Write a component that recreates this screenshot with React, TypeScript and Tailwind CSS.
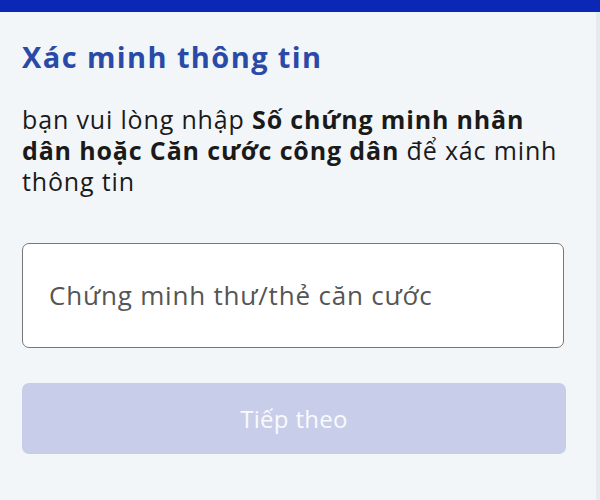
export default function App() {
  return (
    <div className="relative h-[500px] w-[600px] overflow-hidden bg-[#f3f6f9] font-['Open_Sans','Noto_Sans',sans-serif]">
      <div className="h-[12px] bg-[#0a28b5]" />
      <div className="flex flex-col pl-[22px] pr-[12px]">
        <h1 className="mt-[28px] text-[29px] font-bold leading-[34px] tracking-[1.4px] text-[#2a4aa8]">
          Xác minh thông tin
        </h1>
        <p className="mt-[30px] text-[25px] leading-[31px] tracking-[0.85px] text-[#1a1a1a]">
          bạn vui lòng nhập <b className="font-bold">Số chứng minh nhân</b>
          <br />
          <b className="font-bold">dân hoặc Căn cước công dân</b> để xác minh
          <br />
          thông tin
        </p>
        <div className="mr-[24px] mt-[46px] flex h-[105px] items-center rounded-[7px] border-[1.5px] border-[#777] bg-white pl-[26px]">
          <span className="text-[26px] tracking-[0.8px] text-[#555]">Chứng minh thư/thẻ căn cước</span>
        </div>
        <button className="mr-[22px] mt-[35px] flex h-[71px] items-center justify-center rounded-[7px] bg-[#c8cdea] text-[24px] tracking-[0.3px] text-white/90">
          Tiếp theo
        </button>
      </div>
      <div className="absolute right-0 top-[12px] h-full w-[4px] bg-[#e6eaee]" />
    </div>
  );
}
